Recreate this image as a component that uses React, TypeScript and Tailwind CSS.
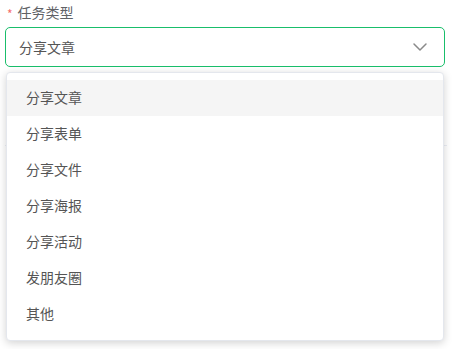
import { ChevronDown } from 'lucide-react';

const options = ['分享文章', '分享表单', '分享文件', '分享海报', '分享活动', '发朋友圈', '其他'];

export default function App() {
  return (
    <div className="relative w-[452px] h-[349px] bg-white overflow-hidden font-['Noto_Sans_CJK_SC',sans-serif]">
      <div className="px-[5px]">
        <div className="flex items-center h-[24px] pl-[2px] text-[14px] text-[#606266]">
          <span className="text-[#f56c6c] text-[12px] mr-[5px] mt-[3px]">*</span>
          <span>任务类型</span>
        </div>
        <div className="mt-[3px] h-[40px] w-[440px] border border-[#19be6b] rounded-[5px] flex items-center justify-between pl-[13px] pr-[12px] text-[14px] text-[#555]">
          <span>分享文章</span>
          <ChevronDown size={24} strokeWidth={1.5} className="text-[#8a8a8a]" />
        </div>
        <div className="mt-[78px] h-px bg-[#ebeef5]" />
      </div>

      <div className="absolute left-[6px] top-[72px] w-[438px] bg-white border border-[#e4e7ed] rounded-[4px] shadow-[0_2px_8px_rgba(0,0,0,0.18)] pt-[7px] pb-[8px]">
        {options.map((o, i) => (
          <div
            key={o}
            className={`h-[36px] flex items-center pl-[19px] pb-[2px] text-[14px] text-[#555] ${i === 0 ? 'bg-[#f5f5f5]' : ''}`}
          >
            {o}
          </div>
        ))}
      </div>
    </div>
  );
}
